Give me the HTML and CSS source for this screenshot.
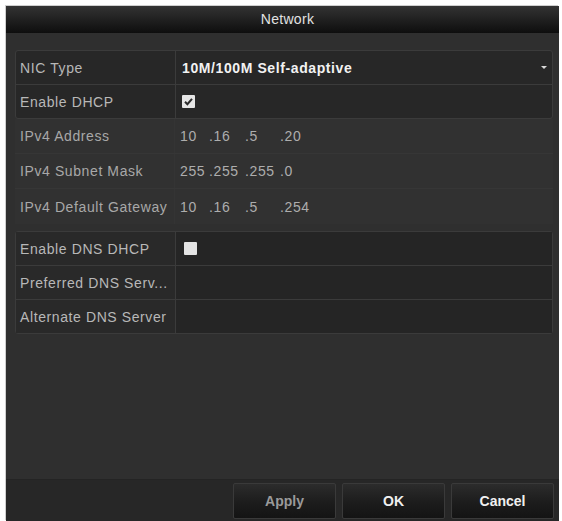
FILE: index.html
```html
<!DOCTYPE html>
<html>
<head>
<meta charset="utf-8">
<link rel="stylesheet" href="styles.css">
</head>
<body>
<div class="dialog">
  <div class="titlebar">Network</div>
  <div class="content">
    <div class="group">
      <div class="row">
        <div class="label">NIC Type</div>
        <div class="value strong">10M/100M Self-adaptive<span class="caret"></span></div>
      </div>
      <div class="row">
        <div class="label">Enable DHCP</div>
        <div class="value">
          <svg class="check" width="13" height="13" viewBox="0 0 13 13"><rect x="0" y="0" width="13" height="13" rx="1" fill="#e6e6e6"/><path d="M3 6.8 L5.4 9.2 L10 3.8" fill="none" stroke="#2a2a2a" stroke-width="2"/></svg>
        </div>
      </div>
    </div>
    <div class="plain">
      <div class="row">
        <div class="label">IPv4 Address</div>
        <div class="value ip"><span class="seg s1">10</span><span class="seg s2">.16</span><span class="seg s3">.5</span><span class="seg">.20</span></div>
      </div>
      <div class="row">
        <div class="label">IPv4 Subnet Mask</div>
        <div class="value ip"><span class="seg s1">255</span><span class="seg s2">.255</span><span class="seg s3">.255</span><span class="seg">.0</span></div>
      </div>
      <div class="row">
        <div class="label">IPv4 Default Gateway</div>
        <div class="value ip"><span class="seg s1">10</span><span class="seg s2">.16</span><span class="seg s3">.5</span><span class="seg">.254</span></div>
      </div>
    </div>
    <div class="group dns">
      <div class="row">
        <div class="label">Enable DNS DHCP</div>
        <div class="value"><span class="box"></span></div>
      </div>
      <div class="row">
        <div class="label">Preferred DNS Serv...</div>
        <div class="value"></div>
      </div>
      <div class="row">
        <div class="label">Alternate DNS Server</div>
        <div class="value"></div>
      </div>
    </div>
  </div>
  <div class="footer">
    <div class="btn dim">Apply</div>
    <div class="btn">OK</div>
    <div class="btn">Cancel</div>
  </div>
</div>
</body>
</html>
```

FILE: styles.css
```css
html, body {
  margin: 0;
  padding: 0;
  background: #ffffff;
}
body {
  font-family: "Liberation Sans", Arial, sans-serif;
  font-size: 14px;
  letter-spacing: 0.6px;
}
.dialog {
  margin: 6px 0 0 6px;
  width: 553px;
  height: 515px;
  background: #2f2f2f;
  display: flex;
  flex-direction: column;
  box-shadow: -1px -1px 0 #cfcfcf;
}
.titlebar {
  height: 27px;
  line-height: 27px;
  text-align: center;
  color: #e2e2e2;
  font-size: 14px;
  letter-spacing: 0.3px;
  padding-left: 10px;
  background: linear-gradient(#333 0%, #222 45%, #0e0e0e 100%);
}
.content {
  flex: 1;
  padding: 17px 6px 0 9px;
  display: flex;
  flex-direction: column;
}
.group {
  border: 1px solid #3b3b3b;
  border-radius: 3px;
  background: #272727;
}
.row {
  display: grid;
  grid-template-columns: 160px 1fr;
  height: 33px;
  border-bottom: 1px solid #3b3b3b;
}
.group .row:last-child {
  border-bottom: none;
}
.label {
  border-right: 1px solid #3b3b3b;
  padding-left: 4px;
  display: flex;
  align-items: center;
  color: #b8b8b8;
  white-space: nowrap;
  overflow: hidden;
}
.value {
  position: relative;
  padding-left: 6px;
  display: flex;
  align-items: center;
  color: #b4b4b4;
}
.strong {
  color: #f2f2f2;
  font-weight: bold;
  letter-spacing: 0.6px;
}
.caret {
  position: absolute;
  right: 5px;
  top: 15px;
  width: 0;
  height: 0;
  border-left: 3px solid transparent;
  border-right: 3px solid transparent;
  border-top: 3px solid #d8d8d8;
}
.check {
  display: block;
}
.plain {
  margin-bottom: 7px;
  background: #313131;
}
.plain .row {
  height: 34px;
  border-bottom: 1px solid #363636;
}
.plain .row:last-child {
  border-bottom: none;
  height: 35px;
}
.plain .label {
  border-right: 1px solid #343434;
  color: #a8a8a8;
  padding-left: 5px;
}
.plain .value {
  padding-left: 5px;
}
.ip {
  color: #adadad;
}
.seg {
  display: inline-block;
}
.s1 { width: 29px; }
.s2 { width: 36px; }
.s3 { width: 35px; }
.dns .value {
  background: #252525;
}
.dns .label {
  background: #292929;
}
.box {
  display: block;
  width: 13px;
  height: 13px;
  margin-left: 2px;
  background: #e4e4e4;
  border-radius: 1px;
}
.footer {
  height: 42px;
  background: #272727;
  border-top: 1px solid #242424;
  box-sizing: border-box;
  display: flex;
  justify-content: flex-end;
  align-items: flex-start;
  padding: 3px 5px 0 0;
  gap: 6px;
}
.btn {
  width: 103px;
  height: 36px;
  box-sizing: border-box;
  border: 1px solid #3a3a3a;
  border-radius: 2px;
  background: linear-gradient(#2c2c2c 0%, #1c1c1c 55%, #141414 100%);
  color: #f0f0f0;
  font-weight: bold;
  font-size: 14px;
  letter-spacing: 0;
  display: flex;
  align-items: center;
  justify-content: center;
}
.btn.dim {
  color: #9a9a9a;
}
```
